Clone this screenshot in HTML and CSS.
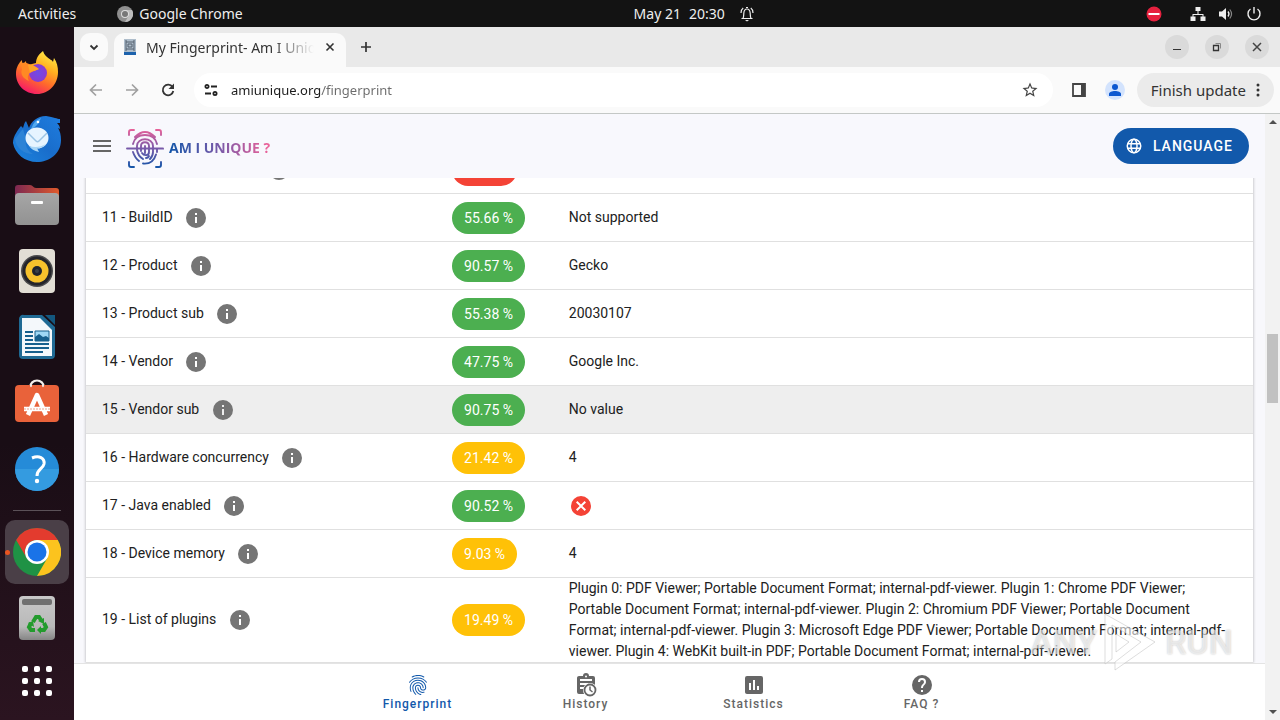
FILE: index.html
```
<!DOCTYPE html>
<html lang="en">
<head>
    <meta charset="UTF-8">
    <meta name="viewport" content="width=device-width, initial-scale=1">
    <title>My Fingerprint- Am I Unique ?</title>
    <link rel="stylesheet" href="styles.css">
</head>
<body>
<!-- shared icons -->
<svg class="defs" aria-hidden="true">
    <symbol id="i-info" viewBox="0 0 24 24"><path d="M12 2a10 10 0 1 0 0 20 10 10 0 0 0 0-20zm1 15h-2v-6h2v6zm0-8h-2V7h2v2z"/></symbol>
    <symbol id="i-cancel" viewBox="0 0 24 24"><path d="M12 2a10 10 0 1 0 0 20 10 10 0 0 0 0-20zm5 13.6L15.6 17 12 13.4 8.4 17 7 15.6l3.6-3.6L7 8.4 8.4 7l3.6 3.6L15.6 7 17 8.4 13.4 12z"/></symbol>
</svg>

<header class="topbar">
    <div class="topbar-left">
        <button class="top-btn">Activities</button>
        <button class="top-btn app">
            <svg width="16" height="16" viewBox="0 0 16 16"><circle cx="8" cy="8" r="8" fill="#8f8f8f"/><path d="M8 4h7A8 8 0 0 1 8 16l3.500-6z" fill="#bdbdbd"/><circle cx="8" cy="8" r="4" fill="#ddd"/><circle cx="8" cy="8" r="3" fill="#777"/></svg>
            Google Chrome
        </button>
    </div>
    <button class="top-btn clock"><span>May 21</span><span>20:30</span>
        <svg width="16" height="16" viewBox="0 0 16 16" fill="none" stroke="#eee" stroke-width="1.200"><path d="M2.500 12.500h11M4 12.300c.8-1.500.7-3 .8-5C5 4.500 6.200 3 8 3s3 1.500 3.200 4.300c.1 2 0 3.500.8 5M2 7c0-2.500.8-4 2.200-5M14 7c0-2.500-.8-4-2.200-5M7 1.500h2"/><path d="M6 14h4l-2 1.500z" fill="#eee" stroke="none"/></svg>
    </button>
    <div class="topbar-right">
        <svg class="dnd" width="16" height="16" viewBox="0 0 16 16"><circle cx="8" cy="8" r="7.500" fill="#e6213f"/><path d="M2.500 7h11v2h-11z" fill="#fff"/></svg>
        <svg width="16" height="16" viewBox="0 0 16 16" fill="#eee"><path d="M5.500 1h5v4h-2v3h5v2.500h2V15h-5v-4.500h2V9h-9v1.500h2V15h-5v-4.500h2V8h5V5h-2z"/></svg>
        <svg width="16" height="16" viewBox="0 0 16 16"><path d="M1 5.500h3L8 2v12l-4-3.500H1z" fill="#eee"/><path d="M10 5.500q2 2.500 0 5" fill="none" stroke="#eee" stroke-width="1.300"/><path d="M11.800 3.500q3.500 4.500 0 9" fill="none" stroke="#888" stroke-width="1.200"/></svg>
        <svg width="16" height="16" viewBox="0 0 16 16" fill="none" stroke="#eee" stroke-width="1.400"><path d="M4.500 3a6 6 0 1 0 7 0M8 1v6.500"/></svg>
    </div>
</header>

<div class="desktop">
<nav class="dock" aria-label="Dock">
    <button class="dock-btn" aria-label="Firefox">
        <svg width="48" height="48" viewBox="0 0 48 48">
            <defs>
                <linearGradient id="fx" x1=".8" y1="0" x2=".3" y2="1"><stop offset="0" stop-color="#fff04a"/><stop offset=".35" stop-color="#ffb020"/><stop offset=".65" stop-color="#ff6a2b"/><stop offset="1" stop-color="#f5156c"/></linearGradient>
                <radialGradient id="fxp"><stop offset="0" stop-color="#6f4be8"/><stop offset="1" stop-color="#8a3bd0"/></radialGradient>
            </defs>
            <path d="M30 2c1 4 4 6 8 9 1 0 2 2 2 2l1-4c3 4 4 9 4 14 0 12-9 22-21 22S3 36 3 25c0-6 2-9 4-12l2-2c0 2 0 3 1 4l3-3c0 2 1 4 2 4l8-2c0-5 3-9 7-12z" fill="url(#fx)"/>
            <circle cx="25" cy="24" r="9" fill="url(#fxp)"/>
            <path d="M8 14c5-1 9 1 14 4l2 2c-2 3-6 2-8 5-2 2-1 5 0 7-6-2-9-8-7-11 0-3-1-5-1-7z" fill="#ff8a24"/>
            <path d="M15 16c4-1 7 1 11 4-2 2-7 1-9 4z" fill="#ffa426"/>
        </svg>
    </button>
    <button class="dock-btn" aria-label="Thunderbird">
        <svg width="48" height="48" viewBox="0 0 48 48">
            <defs><linearGradient id="tb" x1="1" y1="0" x2="0" y2="1"><stop offset="0" stop-color="#1f7de0"/><stop offset=".5" stop-color="#196dcb"/><stop offset="1" stop-color="#1c84de"/></linearGradient></defs>
            <path d="M47 4c-3 0-6-2-14-3-9 0-15 6-17 12l-3-7c-2 2-2 4-3 7l-2-2c-3 4-8 10-8 17 2 11 12 19 24 19s24-8 24-22c0-5-1-9-3-12l2 1c0-3-2-5-3-6h3z" fill="url(#tb)"/>
            <path d="M28 3c-5 2-8 5-9 9l-2 3 5-3c2-2 4-4 6-9z" fill="#51a9ef"/>
            <path d="M2 24c1 9 9 15 18 15-6-3-8-9-7-15L10 14c-3 3-5 6-8 10z" fill="#2c83d6"/>
            <ellipse cx="24" cy="23" rx="11.500" ry="10.500" fill="#e6f4ff"/>
            <path d="M15 18l8 8c1 1 2 1 3 0l8-8" fill="none" stroke="#9bc4e5" stroke-width="1.500"/>
            <path d="M16 31c2 3 5 5 10 6l-2-4c4 0 7-1 9-4-5 3-11 4-17 2z" fill="#a9d6f6"/>
            <circle cx="25" cy="7" r="1.300" fill="#fff"/>
        </svg>
    </button>
    <button class="dock-btn" aria-label="Files">
        <svg width="48" height="48" viewBox="0 0 48 48">
            <defs><linearGradient id="fo"><stop offset="0" stop-color="#7c2852"/><stop offset="1" stop-color="#e05a2c"/></linearGradient><linearGradient id="fg" x2="0" y2="1"><stop offset="0" stop-color="#a6a6a6"/><stop offset="1" stop-color="#929292"/></linearGradient></defs>
            <path d="M5 4h12c3 0 3 3 6 3h20a3 3 0 0 1 3 3v12H2V7a3 3 0 0 1 3-3z" fill="url(#fo)"/>
            <rect x="2" y="12" width="44" height="32" rx="4" fill="url(#fg)"/>
            <rect x="18" y="20" width="12" height="3" rx="1" fill="#fff"/>
        </svg>
    </button>
    <button class="dock-btn" aria-label="Rhythmbox">
        <svg width="48" height="48" viewBox="0 0 48 48">
            <rect x="6" y="2" width="36" height="44" rx="4" fill="#e2ded5"/>
            <circle cx="24" cy="24" r="16" fill="#4a4a4c"/><circle cx="24" cy="24" r="14.500" fill="#24242a"/>
            <circle cx="24" cy="24" r="11.500" fill="#f6c12c"/><circle cx="24" cy="24" r="5" fill="#20242e"/><circle cx="24" cy="24" r="2" fill="#3a4048"/>
        </svg>
    </button>
    <button class="dock-btn" aria-label="LibreOffice Writer">
        <svg width="48" height="48" viewBox="0 0 48 48">
            <path d="M11 2h18l13 12v28a4 4 0 0 1-4 4H10a4 4 0 0 1-4-4V6a4 4 0 0 1 5-4z" fill="#1f6a94"/>
            <path d="M9 5h18l12 12v26H9z" fill="#f4f8fb"/>
            <path d="M32 2h10v10z" fill="#13577e"/>
            <path d="M12 18h8v2h-8zm0 4h8v2h-8zm0 4h8v2h-8zm0 4h24v2H12zm0 4h24v2H12zm0 4h18v2H12z" fill="#17608d"/>
            <rect x="22" y="18" width="14" height="10" fill="#9fd8f5"/><path d="M22 28v-4l4-3 4 3 3-1 3 2v3z" fill="#17608d"/><path d="M22 18h14v10H22z" fill="none" stroke="#17608d"/>
        </svg>
    </button>
    <button class="dock-btn" aria-label="Ubuntu Software">
        <svg width="48" height="48" viewBox="0 0 48 48">
            <path d="M17 9c0-10 14-10 14 0" fill="none" stroke="#f3efeb" stroke-width="2.200"/>
            <rect x="2" y="6" width="44" height="37" rx="4" fill="#e9623a"/>
            <path d="M15 36l9-20 9 20M11 30h26" fill="none" stroke="#fff" stroke-width="4.500" stroke-linejoin="round"/>
            <path d="M11 30h26" stroke="#e9a48e" stroke-dasharray="2 1"/>
            <path d="M17 6c0 3 2 3 2 0M29 6c0 3 2 3 2 0" fill="#f3efeb"/>
        </svg>
    </button>
    <button class="dock-btn" aria-label="Help">
        <svg width="48" height="48" viewBox="0 0 48 48">
            <circle cx="24" cy="24" r="22" fill="#258bd8"/><path d="M2 24a22 22 0 0 0 44 0z" fill="#349be0"/>
            <path d="M19 13c7-3 13 0 12 6-1 5-7 5-7 12" fill="none" stroke="#fff" stroke-width="3"/><circle cx="24" cy="36" r="2.200" fill="#fff"/>
        </svg>
    </button>
    <hr class="dock-sep">
    <button class="dock-btn running" aria-label="Google Chrome">
        <svg width="48" height="48" viewBox="0 0 48 48">
            <circle cx="24" cy="24" r="24" fill="#1f9245"/>
            <path d="M24 12h20.800A24 24 0 0 1 24 48l10.400-18z" fill="#fcc31e"/>
            <path d="M24 0A24 24 0 0 1 44.800 12H24a12 12 0 0 0-10.400 18L3.200 12A24 24 0 0 1 24 0z" fill="#e33b2e"/>
            <circle cx="24" cy="24" r="12" fill="#fff"/><circle cx="24" cy="24" r="9.500" fill="#1a73e8"/>
        </svg>
    </button>
    <button class="dock-btn" aria-label="Trash">
        <svg width="48" height="48" viewBox="0 0 48 48">
            <defs><linearGradient id="tr" x2="0" y2="1"><stop offset="0" stop-color="#c8c8c8"/><stop offset=".7" stop-color="#b9b9b9"/><stop offset="1" stop-color="#858585"/></linearGradient></defs>
            <rect x="6" y="2" width="36" height="44" rx="4" fill="url(#tr)"/><rect x="9" y="5" width="30" height="6" rx="2" fill="#707070"/>
            <g fill="none" stroke="#239b2d" stroke-width="4"><path d="M20 28l3-5h3l2 3M31 29l2 4-2 3h-4M22 36h-4l-2-3 2-4"/></g>
            <path d="M25 27l6-3v6zM28 32v8l-4-4zM15 29l5-2 1 6z" fill="#239b2d"/>
        </svg>
    </button>
    <button class="dock-btn apps" aria-label="Show Applications">
        <svg width="48" height="48" viewBox="0 0 48 48" fill="#fff"><g id="dots"><rect x="9" y="9" width="6" height="6" rx="2"/><rect x="21" y="9" width="6" height="6" rx="2"/><rect x="33" y="9" width="6" height="6" rx="2"/></g><use href="#dots" y="12"/><use href="#dots" y="24"/></svg>
    </button>
</nav>

<div class="browser">
    <div class="tabs">
        <button class="tab-search" aria-label="Search tabs"><svg width="12" height="12" viewBox="0 0 12 12" fill="none" stroke="#333" stroke-width="1.800"><path d="M2.500 4.500L6 8l3.500-3.500"/></svg></button>
        <div class="tab">
            <svg width="16" height="16" viewBox="0 0 16 16"><path d="M2 0h12v13H2z" fill="#aebdcb"/><path d="M2 13h12v3H2z" fill="#1d62ac"/><path d="M4 3h8v7H4zM4 1v2M12 1v2M4 10v2M12 10v2M6 5h4v3H6z" fill="none" stroke="#55606e"/></svg>
            <span class="tab-title">My Fingerprint- Am I Unique ?</span>
            <button class="plain" aria-label="Close tab"><svg width="10" height="10" viewBox="0 0 10 10" stroke="#333" stroke-width="1.600"><path d="M1.500 1.500l7 7M8.500 1.500l-7 7"/></svg></button>
        </div>
        <button class="plain new-tab" aria-label="New tab"><svg width="12" height="12" viewBox="0 0 12 12" stroke="#333" stroke-width="1.700"><path d="M6 1v10M1 6h10"/></svg></button>
        <div class="win-btns">
            <button aria-label="Minimize"><svg width="12" height="12" viewBox="0 0 12 12" stroke="#333"><path d="M2 8.500h8"/></svg></button>
            <button aria-label="Restore"><svg width="12" height="12" viewBox="0 0 12 12" fill="none" stroke="#333"><path d="M2.500 4.500h5v5h-5z" stroke-width="1.300"/><path d="M4.500 2.500h5v5" stroke="#888"/></svg></button>
            <button aria-label="Close"><svg width="12" height="12" viewBox="0 0 12 12" stroke="#444" stroke-width="1.500"><path d="M2 2l8 8M10 2l-8 8"/></svg></button>
        </div>
    </div>
    <div class="toolbar">
        <button class="plain tool" aria-label="Back"><svg width="16" height="16" viewBox="0 0 16 16" fill="none" stroke="#a0a0a0" stroke-width="1.700"><path d="M14 8H3M8 2.500L2.500 8 8 13.500"/></svg></button>
        <button class="plain tool" aria-label="Forward"><svg width="16" height="16" viewBox="0 0 16 16" fill="none" stroke="#a0a0a0" stroke-width="1.700"><path d="M2 8h11M8 2.500L13.500 8 8 13.500"/></svg></button>
        <button class="plain tool" aria-label="Reload"><svg width="16" height="16" viewBox="0 0 16 16"><path d="M12.500 5A5.300 5.300 0 1 0 13.300 9" fill="none" stroke="#333" stroke-width="1.800"/><path d="M14 1.500V7H8.500z" fill="#333"/></svg></button>
        <div class="omnibox">
            <button class="plain" aria-label="Site information"><svg width="16" height="16" viewBox="0 0 16 16" fill="none" stroke="#222" stroke-width="1.800"><circle cx="4" cy="4.500" r="1.600"/><path d="M8 4.500h6M2 11.500h6"/><circle cx="12" cy="11.500" r="1.600"/></svg></button>
            <input class="url" type="text" aria-label="Address" value="amiunique.org/fingerprint">
            <button class="plain" aria-label="Bookmark"><svg width="18" height="18" viewBox="0 0 24 24" fill="#444"><path d="M22 9.240l-7.190-.62L12 2 9.190 8.630 2 9.240l5.460 4.730L5.820 21 12 17.270 18.180 21l-1.630-7.030zM12 15.400l-3.760 2.270 1-4.280-3.320-2.880 4.380-.38L12 6.100l1.710 4.040 4.380.38-3.320 2.880 1 4.280z"/></svg></button>
        </div>
        <button class="plain tool" aria-label="Side panel"><svg width="16" height="16" viewBox="0 0 16 16"><path d="M2 2h12v12H2z" fill="none" stroke="#444" stroke-width="1.800"/><path d="M10 2h4v12h-4z" fill="#444"/></svg></button>
        <button class="plain tool" aria-label="Profile"><svg width="20" height="20" viewBox="0 0 20 20"><circle cx="10" cy="10" r="10" fill="#d3e3fd"/><circle cx="10" cy="7" r="3" fill="#0b57d0"/><path d="M4 16v-2c0-4 12-4 12 0v2z" fill="#0b57d0"/></svg></button>
        <button class="update">Finish update<svg width="4" height="16" viewBox="0 0 4 16" fill="#333"><circle cx="2" cy="3" r="1.500"/><circle cx="2" cy="8" r="1.500"/><circle cx="2" cy="13" r="1.500"/></svg></button>
    </div>

    <div class="view">
    <div class="page">
        <header class="site-head">
            <button class="plain" aria-label="Menu"><svg width="24" height="24" viewBox="0 0 24 24" fill="#666"><path d="M3 6h18v2H3zm0 5h18v2H3zm0 5h18v2H3z"/></svg></button>
            <a class="brand" href="#">
                <svg width="38" height="40" viewBox="0 0 38 40" fill="none" stroke="url(#lg)" stroke-width="1.900" stroke-linecap="round">
                    <defs><linearGradient id="lg" gradientUnits="userSpaceOnUse" x1="0" y1="0" x2="0" y2="40"><stop offset="0" stop-color="#ef6298"/><stop offset=".5" stop-color="#7a5aa9"/><stop offset="1" stop-color="#1255a8"/></linearGradient></defs>
                    <path d="M3 7V4q0-2 2-2h3M30 2h3q2 0 2 2v3M3 34v3q0 2 2 2h3M30 39h3q2 0 2-2v-3"/>
                    <path d="M1 20.500h36v-.1"/>
                    <path d="M9 9Q19-1 29 9M7 16q2-9 12-9t12 9M7 24q2 6 6 9M17 35.500q10 1 13-9M31 21v3"/>
                    <path d="M11 22v-4c0-9 16-9 16 0v6c0 3-1 5-3 7M11 22q1 6 6 9"/>
                    <path d="M15 23v-5c0-5 8-5 8 0v6c0 4-5 4-7 1M19 18v7M20 30q2 0 3-2"/>
                </svg>
                <span>AM I UNIQUE ?</span>
            </a>
            <button class="lang"><svg width="18" height="18" viewBox="0 0 24 24" fill="none" stroke="#fff" stroke-width="2"><circle cx="12" cy="12" r="9"/><ellipse cx="12" cy="12" rx="4" ry="9"/><path d="M4 9h16M4 15h16"/></svg>LANGUAGE</button>
        </header>

        <main class="list">
            <table class="attrs">
                <colgroup><col class="c-name"><col class="c-ratio"><col></colgroup>
                <tbody>
                <tr><td>10 - Navigator properties <svg class="info"><use href="#i-info"/></svg></td><td><span class="chip red">0.01 %</span></td><td></td></tr>
                <tr><td>11 - BuildID <svg class="info"><use href="#i-info"/></svg></td><td><span class="chip">55.66 %</span></td><td>Not supported</td></tr>
                <tr><td>12 - Product <svg class="info"><use href="#i-info"/></svg></td><td><span class="chip">90.57 %</span></td><td>Gecko</td></tr>
                <tr><td>13 - Product sub <svg class="info"><use href="#i-info"/></svg></td><td><span class="chip">55.38 %</span></td><td>20030107</td></tr>
                <tr><td>14 - Vendor <svg class="info"><use href="#i-info"/></svg></td><td><span class="chip">47.75 %</span></td><td>Google Inc.</td></tr>
                <tr class="hover"><td>15 - Vendor sub <svg class="info"><use href="#i-info"/></svg></td><td><span class="chip">90.75 %</span></td><td>No value</td></tr>
                <tr><td>16 - Hardware concurrency <svg class="info"><use href="#i-info"/></svg></td><td><span class="chip amber">21.42 %</span></td><td>4</td></tr>
                <tr><td>17 - Java enabled <svg class="info"><use href="#i-info"/></svg></td><td><span class="chip">90.52 %</span></td><td><svg class="no" role="img" aria-label="No"><use href="#i-cancel"/></svg></td></tr>
                <tr><td>18 - Device memory <svg class="info"><use href="#i-info"/></svg></td><td><span class="chip amber">9.03 %</span></td><td>4</td></tr>
                <tr><td>19 - List of plugins <svg class="info"><use href="#i-info"/></svg></td><td><span class="chip amber">19.49 %</span></td><td>Plugin 0: PDF Viewer; Portable Document Format; internal-pdf-viewer. Plugin 1: Chrome PDF Viewer; Portable Document Format; internal-pdf-viewer. Plugin 2: Chromium PDF Viewer; Portable Document Format; internal-pdf-viewer. Plugin 3: Microsoft Edge PDF Viewer; Portable Document Format; internal-pdf-viewer. Plugin 4: WebKit built-in PDF; Portable Document Format; internal-pdf-viewer.</td></tr>
                </tbody>
            </table>
        </main>

        <nav class="bottom" aria-label="Sections">
            <a class="active" href="#"><svg width="24" height="24" viewBox="0 0 24 24" fill="currentColor"><path d="M17.810 4.470c-.08 0-.16-.02-.23-.06C15.660 3.420 14 3 12.010 3c-1.980 0-3.860.47-5.570 1.410-.24.13-.54.04-.68-.2-.13-.24-.04-.55.2-.68C7.820 2.520 9.860 2 12.010 2c2.130 0 3.990.47 6.030 1.520.25.13.34.43.21.67-.09.18-.26.28-.44.28zM3.500 9.720c-.1 0-.2-.03-.29-.09-.23-.16-.28-.47-.12-.7.99-1.400 2.250-2.500 3.750-3.270C9.980 4.040 14 4.030 17.150 5.650c1.500.77 2.760 1.860 3.750 3.250.16.22.11.54-.12.7-.23.16-.54.11-.7-.12-.9-1.260-2.040-2.250-3.390-2.940-2.870-1.470-6.540-1.470-9.400.01-1.360.7-2.500 1.700-3.400 2.960-.08.14-.23.21-.39.21zm6.250 12.070c-.13 0-.26-.05-.35-.15-.87-.87-1.340-1.430-2.010-2.640-.69-1.230-1.050-2.730-1.050-4.340 0-2.970 2.540-5.390 5.660-5.390s5.660 2.420 5.660 5.390c0 .28-.22.5-.5.5s-.5-.22-.5-.5c0-2.420-2.090-4.390-4.660-4.390s-4.660 1.970-4.660 4.390c0 1.440.32 2.770.93 3.850.64 1.150 1.080 1.640 1.850 2.420.19.2.19.51 0 .71-.11.1-.24.15-.37.15zm7.170-1.850c-1.190 0-2.240-.3-3.100-.89-1.490-1.010-2.380-2.650-2.380-4.390 0-.28.22-.5.5-.5s.5.22.5.5c0 1.410.72 2.740 1.940 3.560.71.48 1.540.71 2.540.71.24 0 .64-.03 1.040-.1.27-.05.53.13.58.41.05.27-.13.53-.41.58-.57.11-1.070.12-1.210.12zM14.910 22c-.04 0-.09-.01-.13-.02-1.590-.44-2.630-1.030-3.720-2.100-1.400-1.390-2.170-3.240-2.170-5.220 0-1.620 1.380-2.940 3.080-2.940s3.080 1.320 3.080 2.940c0 1.070.93 1.940 2.080 1.940s2.080-.87 2.080-1.940c0-3.770-3.250-6.830-7.250-6.830-2.840 0-5.440 1.580-6.610 4.030-.39.81-.59 1.760-.59 2.800 0 .78.070 2.010.67 3.610.1.26-.03.55-.29.64-.26.1-.55-.04-.64-.29-.49-1.310-.73-2.610-.73-3.960 0-1.200.23-2.290.68-3.240 1.330-2.790 4.280-4.600 7.510-4.600 4.550 0 8.250 3.510 8.250 7.830 0 1.620-1.380 2.940-3.080 2.940s-3.080-1.320-3.080-2.940c0-1.070-.93-1.940-2.080-1.940s-2.080.87-2.080 1.940c0 1.710.66 3.310 1.870 4.510.95.94 1.860 1.460 3.270 1.850.27.07.42.35.35.61-.05.23-.26.38-.47.38z"/></svg>Fingerprint</a>
            <a href="#"><svg width="24" height="24" viewBox="0 0 24 24" fill="currentColor"><path d="M5 3h4a3 3 0 0 1 6 0h4a2 2 0 0 1 2 2v7.100A7 7 0 0 0 11.100 21H5a2 2 0 0 1-2-2V5c0-1.100.9-2 2-2z"/><path d="M6 7h12M6 11h8M6 15h4" stroke="#fff" stroke-width="2"/><circle cx="12" cy="3.500" r="1" fill="#fff"/><circle cx="16" cy="17" r="7" fill="#fff"/><circle cx="16" cy="17" r="5.500" fill="#fff" stroke="currentColor" stroke-width="1.800"/><path d="M16 13.500V17l2.500 2" fill="none" stroke="currentColor" stroke-width="1.500"/></svg>History</a>
            <a href="#"><svg width="24" height="24" viewBox="0 0 24 24" fill="currentColor"><path d="M19 3H5a2 2 0 0 0-2 2v14c0 1.100.9 2 2 2h14a2 2 0 0 0 2-2V5a2 2 0 0 0-2-2zM9 17H7v-7h2zm4 0h-2V7h2zm4 0h-2v-4h2z"/></svg>Statistics</a>
            <a href="#"><svg width="24" height="24" viewBox="0 0 24 24" fill="currentColor"><path d="M12 2a10 10 0 1 0 0 20 10 10 0 0 0 0-20zm1 17h-2v-2h2v2zm2.070-7.750l-.9.920C13.450 12.900 13 13.500 13 15h-2v-.5c0-1.100.45-2.100 1.170-2.830l1.240-1.260c.37-.36.59-.86.59-1.410a2 2 0 0 0-4 0H8a4 4 0 0 1 8 0c0 .88-.36 1.680-.93 2.250z"/></svg>FAQ ?</a>
        </nav>
    </div>
    <div class="scroll" aria-hidden="true">
        <i class="up"></i>
        <div class="track"><span class="before"></span><span class="thumb"></span><span class="after"></span></div>
        <i class="down"></i>
    </div>
    <div class="mark" aria-hidden="true">
        <span>ANY</span>
        <svg width="60" height="60" viewBox="0 0 60 60" fill="#fff" fill-opacity=".6" stroke="#bbb" stroke-opacity=".5"><path d="M4 2l50 28L14 58v-8l26-20L11 13v34l-7 5z"/><path d="M15 22l13 8-13 10z"/></svg>
        <span>RUN</span>
    </div>
    </div>
</div>
</div>
</body>
</html>
```
FILE: styles.css
```
*{margin: 0;padding: 0;box-sizing: border-box;}
body{height: 100vh;display: flex;flex-direction: column;overflow: hidden;font-family: "Noto Sans", "Open Sans", sans-serif;font-size: 14px;color: #333;}
button{border: 0;background: none;font: inherit;color: inherit;}
a{text-decoration: none;color: inherit;}
svg{display: block;flex: none;}
.defs{position: absolute;width: 0;height: 0;}
.plain{display: flex;align-items: center;justify-content: center;}

/* system bar */
.topbar{flex: none;height: 27px;display: flex;align-items: center;background: #131313;color: #eee;}
.topbar-left{width: 49.5%;display: flex;gap: 41px;padding-left: 18px;}
.top-btn{display: flex;align-items: center;gap: 6px;line-height: 20px;}
.clock{gap: 8px;}
.clock svg{margin-left: 6px;}
.topbar-right{margin-left: auto;display: flex;align-items: center;gap: 12px;padding-right: 18px;}
.dnd{margin-right: 16px;}

/* dock */
.desktop{flex: 1;min-height: 0;display: flex;}
.dock{flex: none;width: 74px;padding-top: 13px;display: flex;flex-direction: column;align-items: center;background: linear-gradient(#190d15 60%, #2b1420);}
.dock-btn{flex: none;width: 64px;height: 64px;margin: 1px 0;display: flex;align-items: center;justify-content: center;border-radius: 10px;}
.dock-sep{flex: none;width: 48px;border: 0;border-top: 1px solid #5b5158;margin: 8px 0;}
.running{background: #4a3f47;position: relative;}
.running::before{content: "";position: absolute;left: 0;top: 30px;width: 5px;height: 5px;border-radius: 50%;background: #e95420;}
.dock-btn.apps{height: 58px;}

/* browser */
.browser{flex: 1;min-width: 0;display: flex;flex-direction: column;background: #fafafa;}
.tabs{flex: none;height: 40px;display: flex;align-items: center;padding: 0 11px 0 6px;background: #e9e9e9;}
.tab-search{width: 28px;height: 28px;display: flex;align-items: center;justify-content: center;border-radius: 10px;background: #fafafa;}
.tab{align-self: flex-end;width: 232px;height: 34px;margin-left: 6px;padding: 0 8px 6px;display: flex;align-items: center;gap: 8px;border-radius: 10px 10px 0 0;background: #fafafa;}
.tab-title{flex: 1;overflow: hidden;white-space: nowrap;-webkit-mask-image: linear-gradient(90deg, #000 75%, transparent);mask-image: linear-gradient(90deg, #000 75%, transparent);}
.tab .plain{width: 16px;height: 16px;}
.new-tab{width: 28px;height: 28px;margin-left: 6px;}
.win-btns{margin-left: auto;display: flex;gap: 16px;}
.win-btns button{width: 24px;height: 24px;display: flex;align-items: center;justify-content: center;border-radius: 50%;background: #dadada;}
.toolbar{flex: none;height: 47px;display: flex;align-items: center;padding: 0 6px 0 4px;border-bottom: 1px solid #c4c8c6;}
.tool{width: 36px;height: 36px;}
.omnibox{flex: 1;height: 34px;margin: 0 8px;padding: 0 14px 0 9px;display: flex;align-items: center;gap: 12px;border-radius: 17px;background: #fff;}
.url{flex: 1;min-width: 0;border: 0;outline: 0;font: inherit;font-size: 13px;height: 24px;-webkit-text-fill-color: transparent;background: linear-gradient(90deg, #1c1c1c 89px, #6b6b6b 89px);-webkit-background-clip: text;background-clip: text;}
.update{height: 34px;margin-left: 4px;padding: 0 14px;display: flex;align-items: center;gap: 10px;border-radius: 17px;background: #ebebeb;font-size: 15px;}

/* page */
.view{flex: 1;min-height: 0;display: flex;position: relative;}
.page{flex: 1;min-width: 0;display: flex;flex-direction: column;background: #f8f8fc;font-family: Roboto, sans-serif;}
.site-head{flex: none;height: 64px;display: flex;align-items: center;padding: 0 16px;background: #f8f8fd;}
.brand{margin-left: 12px;padding-top: 3px;display: flex;align-items: center;gap: 5px;font-family: "Open Sans", sans-serif;font-weight: 700;}
.brand span{line-height: 20px;color: transparent;background: linear-gradient(90deg, #1255a8, #7a5aa9 50%, #ef6298);-webkit-background-clip: text;background-clip: text;}
.lang{margin-left: auto;height: 36px;padding: 0 16px 0 12px;display: flex;align-items: center;gap: 10px;border-radius: 18px;background: #1259ab;color: #fff;font-weight: 500;letter-spacing: 1px;}
.list{flex: 1;min-height: 0;overflow: hidden;display: flex;flex-direction: column;justify-content: flex-end;padding: 0 12px;}
.attrs{width: 100%;table-layout: fixed;border-spacing: 0;background: #fff;box-shadow: 0 0 3px rgba(0,0,0,0.3);color: #212121;line-height: 21px;}
.c-name{width: 30%;}
.c-ratio{width: 10%;}
.attrs td{height: 48px;padding: 0 16px;border-bottom: 1px solid #e0e0e0;vertical-align: middle;}
.attrs svg{display: inline-block;width: 24px;height: 24px;vertical-align: middle;}
.info{margin-left: 8px;fill: #757575;}
.no{fill: #f44336;}
.hover{background: #eee;}
.chip{display: inline-block;height: 32px;line-height: 32px;padding: 0 12px;border-radius: 16px;background: #4caf50;color: #fff;vertical-align: middle;}
.amber{background: #ffc107;}
.red{background: #f44336;}

.bottom{flex: none;height: 57px;display: flex;justify-content: center;background: #fff;border-top: 1px solid #e4e4e4;}
.bottom a{width: 168px;display: flex;flex-direction: column;align-items: center;justify-content: center;font-size: 12px;line-height: 14px;font-weight: 500;letter-spacing: 1px;color: #666;}
.bottom a.active{color: #1259ab;}

.scroll{flex: none;width: 15px;display: flex;flex-direction: column;align-items: center;background: #f2f2f2;}
.scroll i{width: 0;height: 0;border: 4px solid transparent;}
.scroll .up{margin: 2px 0 5px;border-bottom-color: #505050;}
.scroll .down{margin: 5px 0 2px;border-top-color: #505050;}
.track{flex: 1;width: 11px;display: flex;flex-direction: column;}
.before{flex: 205;}
.thumb{flex: 69;background: #c1c1c1;}
.after{flex: 302;}

/* watermark */
.mark{position: absolute;right: 47px;bottom: 48px;display: flex;align-items: center;gap: 4px;pointer-events: none;font-family: Roboto, sans-serif;font-size: 34px;line-height: 60px;font-weight: 500;color: rgba(255,255,255,0.6);text-shadow: 0 0 2px rgba(0,0,0,0.25);}
```
